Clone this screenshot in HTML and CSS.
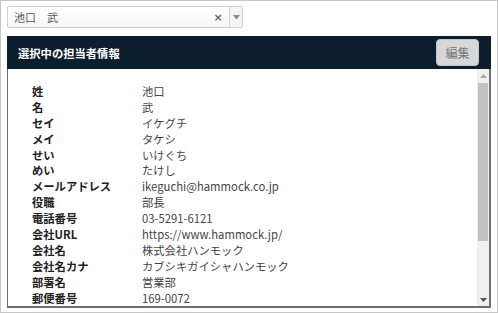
FILE: index.html
```html
<!DOCTYPE html>
<html lang="ja">
<head>
<meta charset="utf-8">
<link rel="stylesheet" href="styles.css">
</head>
<body>
<div class="frame">
  <div class="select">
    <span class="select-text">池口　武</span>
    <span class="select-clear">×</span>
    <span class="select-arrow">
      <svg width="7" height="5" viewBox="0 0 7 5"><path d="M0 0 L7 0 L3.5 4.5 Z" fill="#888"/></svg>
    </span>
  </div>
  <div class="panel">
    <div class="panel-head">
      <span class="panel-title">選択中の担当者情報</span>
      <button class="edit-btn">編集</button>
    </div>
    <div class="panel-body">
      <div class="rows">
        <div class="row"><span class="lbl">姓</span><span class="val">池口</span></div>
        <div class="row"><span class="lbl">名</span><span class="val">武</span></div>
        <div class="row"><span class="lbl">セイ</span><span class="val">イケグチ</span></div>
        <div class="row"><span class="lbl">メイ</span><span class="val">タケシ</span></div>
        <div class="row"><span class="lbl">せい</span><span class="val">いけぐち</span></div>
        <div class="row"><span class="lbl">めい</span><span class="val">たけし</span></div>
        <div class="row"><span class="lbl">メールアドレス</span><span class="val">ikeguchi@hammock.co.jp</span></div>
        <div class="row"><span class="lbl">役職</span><span class="val">部長</span></div>
        <div class="row"><span class="lbl">電話番号</span><span class="val">03-5291-6121</span></div>
        <div class="row"><span class="lbl">会社URL</span><span class="val">https://www.hammock.jp/</span></div>
        <div class="row"><span class="lbl">会社名</span><span class="val">株式会社ハンモック</span></div>
        <div class="row"><span class="lbl">会社名カナ</span><span class="val">カブシキガイシャハンモック</span></div>
        <div class="row"><span class="lbl">部署名</span><span class="val">営業部</span></div>
        <div class="row"><span class="lbl">郵便番号</span><span class="val">169-0072</span></div>
      </div>
      <div class="scrollbar">
        <div class="sb-btn"><svg width="7" height="4" viewBox="0 0 7 4"><path d="M0 4 L7 4 L3.5 0 Z" fill="#a8a8a8"/></svg></div>
        <div class="sb-thumb"></div>
        <div class="sb-track"></div>
        <div class="sb-btn"><svg width="7" height="4" viewBox="0 0 7 4"><path d="M0 0 L7 0 L3.5 4 Z" fill="#505050"/></svg></div>
      </div>
    </div>
  </div>
</div>
</body>
</html>
```

FILE: styles.css
```css
* { box-sizing: border-box; }
html, body { margin: 0; padding: 0; background: #fff; }
body { font-family: "Noto Sans CJK JP", "Noto Sans", sans-serif; }

.frame {
  width: 498px;
  height: 313px;
  border: 1px solid #c6c6c6;
  padding: 5px 6px 4px 6px;
  display: flex;
  flex-direction: column;
  overflow: hidden;
}

.select {
  width: 236px;
  height: 22px;
  border: 1px solid #cfcfcf;
  border-radius: 2px;
  background: linear-gradient(#ffffff, #f6f6f6);
  display: flex;
  align-items: center;
  font-size: 11px;
  color: #555;
}
.select-text { flex: 1; padding-left: 6px; }
.select-clear {
  width: 14px;
  text-align: center;
  font-family: "DejaVu Sans", sans-serif;
  font-weight: bold;
  font-size: 11px;
  color: #666;
  margin-right: 4px;
}
.select-arrow {
  width: 13px;
  height: 20px;
  border-left: 1px solid #d4d4d4;
  display: flex;
  align-items: center;
  justify-content: center;
  background: #f4f4f4;
}

.panel {
  margin-top: 8px;
  flex: 1;
  display: flex;
  flex-direction: column;
  min-height: 0;
}
.panel-head {
  height: 33px;
  background: #0b1e2d;
  display: flex;
  align-items: center;
  justify-content: space-between;
  padding: 0 12px 0 11px;
}
.panel-title {
  color: #fff;
  font-weight: bold;
  font-size: 11.3px;
}
.edit-btn {
  width: 43px;
  height: 27px;
  border: 1px solid #c4c4c4;
  border-radius: 4px;
  background: #d7d7d7;
  color: #777;
  font-family: inherit;
  font-size: 12px;
  padding: 0;
}

.panel-body {
  flex: 1;
  min-height: 0;
  display: flex;
  border: 1px solid #6e6e6e;
  border-top: none;
  border-right-width: 2px;
  border-bottom-width: 2px;
}
.rows {
  flex: 1;
  overflow: hidden;
  padding: 14px 0 0 24px;
}
.row {
  display: flex;
  height: 15.9px;
  line-height: 16px;
  font-size: 11.3px;
  white-space: nowrap;
}
.lbl {
  width: 110px;
  font-weight: bold;
  color: #222;
}
.val { color: #444; }

.scrollbar {
  width: 12px;
  background: #f0f0f0;
  display: flex;
  flex-direction: column;
}
.sb-btn {
  height: 13px;
  display: flex;
  align-items: center;
  justify-content: center;
}
.sb-thumb {
  height: 158px;
  margin: 1px 1px 0 1px;
  background: #c1c1c1;
}
.sb-track { flex: 1; }
```
